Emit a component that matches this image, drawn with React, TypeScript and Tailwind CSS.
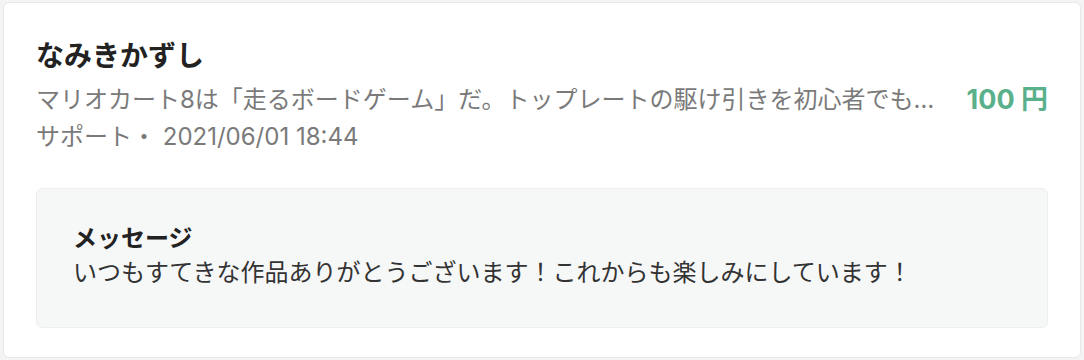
import React from "react";

const SupportCard = () => {
  return (
    <div className="min-h-[360px] w-full bg-[#f4f4f4] pt-[2px] pl-[3px] pr-[3px] font-['Inter','Noto_Sans_CJK_JP',sans-serif]">
      <div className="h-[356px] rounded-md border border-[#e8e8e8] bg-white px-[32px] pt-[35px]">
        <div className="text-[28px] font-bold leading-[36px] text-[#222]">なみきかずし</div>
        <div className="mt-[9px] flex items-center gap-[30px]">
          <div className="min-w-0 flex-1 truncate text-[24px] leading-[34px] text-[#7a7a7a]">
            マリオカート8は「走るボードゲーム」だ。トップレートの駆け引きを初心者でも分かるように解説します
          </div>
          <div className="shrink-0 text-[27px] font-bold leading-[34px] text-[#5bb08c]">100 円</div>
        </div>
        <div className="mt-[3px] text-[24px] leading-[34px] text-[#7a7a7a]">サポート・ 2021/06/01 18:44</div>
        <div className="mt-[34px] rounded-md border border-[#eeeeee] bg-[#f6f7f7] px-[36px] pt-[33px] pb-[38px]">
          <div className="text-[24px] font-bold leading-[34px] text-[#222]">メッセージ</div>
          <div className="text-[24px] leading-[33px] text-[#333]">
            いつもすてきな作品ありがとうございます！これからも楽しみにしています！
          </div>
        </div>
      </div>
    </div>
  );
};

export default function App() {
  return <SupportCard />;
}
